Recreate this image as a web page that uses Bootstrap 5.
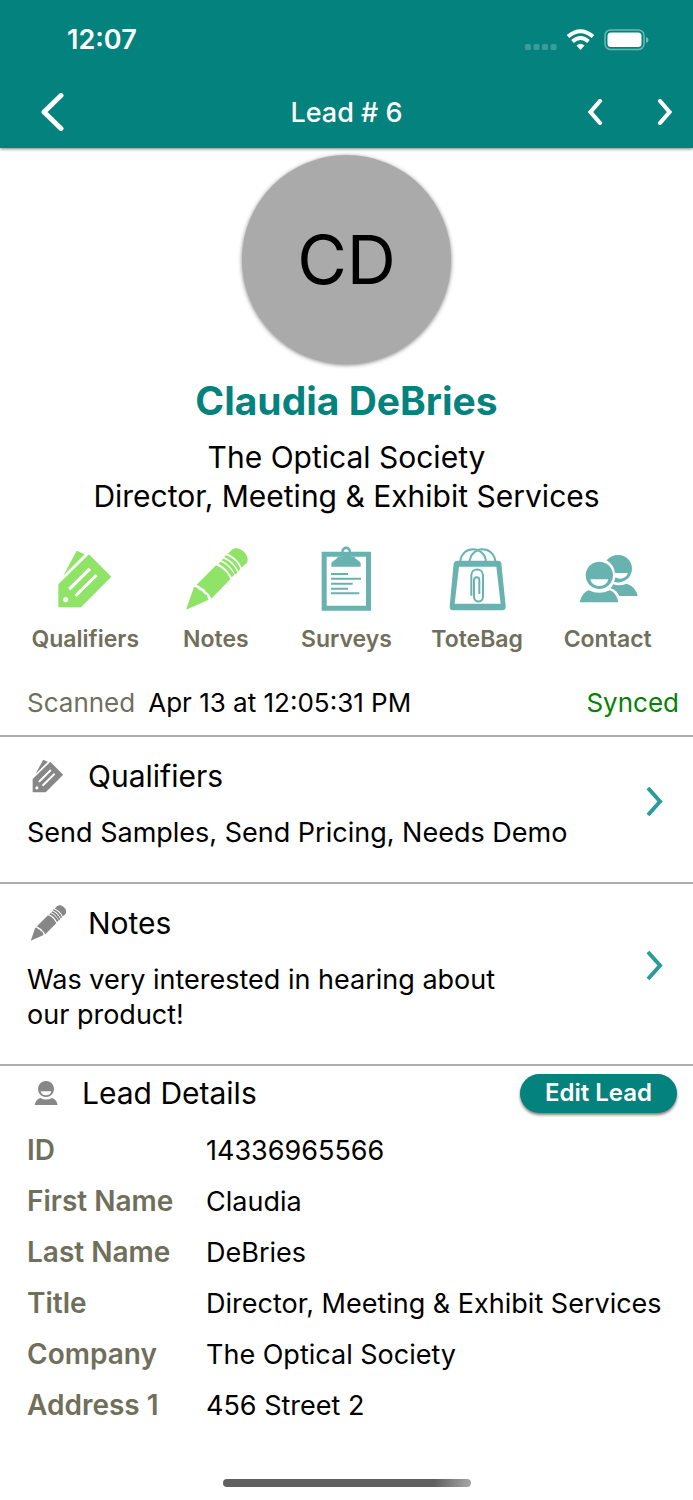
<!DOCTYPE html>
<html lang="en">
<head>
<meta charset="utf-8">
<meta name="viewport" content="width=device-width, initial-scale=1">
<title>Lead # 6</title>
<link href="https://cdn.jsdelivr.net/npm/bootstrap@5.3.0/dist/css/bootstrap.min.css" rel="stylesheet">
<style>
  :root { --teal: #04827e; --olive: #706f5b; --rule: #aeaeae; }
  body { font-family: Inter, "Liberation Sans", sans-serif; font-size: 27px; line-height: 35px; color: #000; background: #fff; }
  button { line-height: inherit; }
  svg { display: block; flex: none; }
  .app-header { background: var(--teal); color: #fff; box-shadow: 0 1px 3px rgba(0,0,0,.5); }
  .status-row { height: 76px; padding: 3px 44px 0 67px; font-weight: 600; }
  .title-row { height: 72px; padding: 0 20px; }
  .title-row h1 { font-size: 27px; line-height: 35px; font-weight: 500; }
  .side { flex: 1 1 0; }
  .back { margin-left: 20px; }
  .icon-btn { background: none; border: 0; padding: 0; color: inherit; }
  .avatar { width: 209px; height: 209px; margin-top: 7px; background: #aaa; font-size: 68px; box-shadow: 0 1px 4px rgba(0,0,0,.5); }
  .person-name { font-size: 39px; line-height: 48px; font-weight: 700; color: var(--teal); margin-top: 13px; }
  .person-role { font-size: 30px; line-height: 39px; margin-top: 13px; }
  .actions { padding: 30px 20px 0; }
  .actions a { flex: 1 1 0; color: #68b2b0; text-decoration: none; }
  .actions a.done { color: #8fe468; }
  .actions span { font-size: 23px; line-height: 30px; font-weight: 600; color: var(--olive); margin-top: 12px; }
  .scan-row { padding: 31px 14px 15px 27px; font-size: 26px; }
  .stamp { gap: 13px; }
  .muted { color: var(--olive); }
  .synced { color: #058205; }
  .panel { border-top: 2px solid var(--rule); padding: 19px 30px 18px 27px; }
  .panel h2, .details h2 { font-size: 30px; line-height: 40px; font-weight: 400; }
  .panel h2 { gap: 19px; margin-bottom: 19px; }
  .panel p { padding-bottom: 14px; }
  .panel .note { max-width: 500px; }
  .glyph { color: #878787; }
  .go { color: #2a9c98; margin-bottom: 18px; }
  .details { border-top: 2px solid var(--rule); padding: 7px 16px 0 27px; }
  .details h2 { gap: 17px; }
  .edit { background: var(--teal); color: #fff; font-size: 24px; line-height: 30px; font-weight: 600; border: 0; border-radius: 20px; padding: 4px 25px 5px; box-shadow: 0 2px 3px rgba(0,0,0,.5); }
  .fields { width: 100%; margin-top: 12px; }
  .fields th { width: 179px; font-size: 28px; font-weight: 600; color: var(--olive); }
  .fields th, .fields td { padding: 8px 0; white-space: nowrap; }
  .home-bar { width: 248px; height: 8px; border-radius: 4px; margin-bottom: 13px; background: linear-gradient(100deg, #606060 85%, #a8a8a8); }
</style>
</head>
<body class="d-flex flex-column min-vh-100">

<svg width="0" height="0" class="position-absolute" aria-hidden="true">
  <symbol id="tags" viewBox="96 48 198 198">
    <path fill="currentColor" d="M170 62 194 73 130 137Z"/>
    <path fill="currentColor" fill-rule="evenodd" d="M207 73 274 140 183 232H115V163ZM137 201a8 8 0 1 0 .1 0ZM206 113 145 174 151 181 213 120ZM226 133 164 194 170 200 232 139Z"/>
    <path stroke="#fff" stroke-width="8" d="M209 116 148 177M229 136 167 197"/>
  </symbol>
  <symbol id="pencil" viewBox="487 48 198 198">
    <g fill="currentColor">
      <path d="M496 239 520 171C528 172 532 175 535 180C542 181 547 184 549 190C556 192 560 196 561 202L563 210Z"/>
      <path d="M527 165 586 106C604 112 622 129 629 148L571 207C569 197 565 191 557 187C554 180 549 176 541 173C538 169 533 166 527 165Z"/>
      <path d="M593 101 600 95C617 102 634 119 641 135L633 142C625 125 611 110 593 101Z"/>
      <path d="M602 91 608 86C628 93 644 110 650 128L643 134C636 116 621 99 602 91Z"/>
      <path d="M610 81 616 76C636 83 653 99 659 117L653 124C645 105 630 89 610 81Z"/>
      <path d="M621 71 634 59C642 52 656 53 668 64C681 75 685 91 677 100L663 113C656 94 641 79 621 71Z"/>
    </g>
  </symbol>
  <symbol id="clipboard" viewBox="70 48 198 198">
    <path fill="currentColor" fill-rule="evenodd" d="M96 65H244V242H96ZM111 80V227H229V80Z"/>
    <path fill="currentColor" fill-rule="evenodd" d="M125 110V100C129 91 140 90 145 80H155V64A14 14 0 0 1 184 64V80H194C199 90 210 91 213 100V110ZM169.500 58a8 8 0 1 0 .1 0Z"/>
    <path stroke="currentColor" stroke-width="6" d="M124 132H175M124 146H214M124 161H189M124 176H175M124 190H209"/>
  </symbol>
  <symbol id="tote" viewBox="462 48 198 198">
    <path fill="currentColor" fill-rule="evenodd" d="M501 92H625Q633 92 634 100L647 228Q648 241 637 241H489Q478 241 479 228L491 100Q493 92 501 92ZM507 110 494 221H632L619 110Z"/>
    <g fill="none" stroke="currentColor" stroke-width="6">
      <path d="M511 94C516 46 582 46 588 94M539 94C545 46 610 46 616 94"/>
      <path d="M544 197V136C544 113 579 113 579 136V199C579 220 552 220 552 199V151C552 139 568 139 568 151V192"/>
    </g>
  </symbol>
  <symbol id="people" viewBox="73 48 198 198">
    <path fill="currentColor" d="M203 75A41 41 0 0 1 244 116A41 41 0 0 1 190 155Q194 146 194 142Q209 150 222 142Q229 138 232 129H193Q190 105 168 91Q182 75 203 75Z"/>
    <path fill="currentColor" d="M188 163Q206 170 228 161Q254 168 261 198H206Q200 182 180 175Z"/>
    <path fill="currentColor" fill-rule="evenodd" d="M146 95a41 41 0 1 0 .1 0ZM119 148H173Q169 168 146 168T119 148Z"/>
    <path fill="currentColor" d="M114 181Q146 196 177 181Q198 188 203 217H87Q94 188 114 181Z"/>
  </symbol>
  <symbol id="person" viewBox="81 90 114 72">
    <path fill="currentColor" fill-rule="evenodd" d="M138 90a24 24 0 1 0 .1 0ZM122 121H154Q152 133 138 133T122 121Z"/>
    <path fill="currentColor" d="M121 141Q138 150 156 141Q170 145 173 162H104Q107 145 121 141Z"/>
  </symbol>
  <symbol id="chevron" viewBox="0 0 17 31">
    <path fill="none" stroke="currentColor" stroke-width="4" d="M2 2 14 15.500 2 29"/>
  </symbol>
</svg>

<header class="app-header">
  <div class="status-row d-flex align-items-center justify-content-between">
    <span>12:07</span>
    <svg width="125" height="24" viewBox="0 0 125 24" aria-label="Wi-Fi on, battery full">
      <g fill="#fff" fill-opacity=".22"><rect x="1" y="16" width="6" height="6" rx="1.500"/><rect x="9.500" y="16" width="6" height="6" rx="1.500"/><rect x="18" y="16" width="6" height="6" rx="1.500"/><rect x="26.500" y="16" width="6" height="6" rx="1.500"/></g>
      <g fill="none" stroke="#fff" stroke-width="4"><path d="M44 8.500Q56.500 -2 69 8.500"/><path d="M48.500 13.500Q56.500 6.500 64.500 13.500"/></g>
      <path fill="#fff" d="M52.500 17.500Q56.500 14 60.500 17.500L56.500 22Z"/>
      <rect x="81" y="2" width="39" height="19.500" rx="5.500" fill="none" stroke="#fff" stroke-opacity=".42" stroke-width="1.500"/>
      <rect x="83.500" y="4.500" width="34" height="14.500" rx="3.500" fill="#fff"/>
      <path fill="#fff" fill-opacity=".45" d="M122 9Q124.500 9.500 124.500 12T122 15Z"/>
    </svg>
  </div>
  <div class="title-row d-flex align-items-center">
    <div class="side"><button class="icon-btn back d-block" aria-label="Back"><svg width="24" height="38" viewBox="0 0 24 38"><path d="M21 2.500 4 19 21 35.500" fill="none" stroke="#fff" stroke-width="5" stroke-linecap="round" stroke-linejoin="round"/></svg></button></div>
    <h1 class="m-0">Lead # 6</h1>
    <div class="side d-flex justify-content-end gap-5">
      <button class="icon-btn me-1" aria-label="Previous lead"><svg width="18" height="26" viewBox="0 0 18 26"><path d="M13 2 3.500 13 13 24" fill="none" stroke="#fff" stroke-width="4.200" stroke-linecap="round"/></svg></button>
      <button class="icon-btn" aria-label="Next lead"><svg width="16" height="26" viewBox="0 0 16 26"><path d="M3 2 12.500 13 3 24" fill="none" stroke="#fff" stroke-width="4.200" stroke-linecap="round"/></svg></button>
    </div>
  </div>
</header>

<main>
  <section class="text-center">
    <div class="avatar rounded-circle mx-auto d-flex align-items-center justify-content-center">CD</div>
    <h2 class="person-name mb-0">Claudia DeBries</h2>
    <p class="person-role mb-0">The Optical Society<br>Director, Meeting &amp; Exhibit Services</p>
  </section>

  <nav class="actions d-flex" aria-label="Lead actions">
    <a href="#qualifiers" class="done d-flex flex-column align-items-center"><svg width="66" height="66"><use href="#tags"/></svg><span>Qualifiers</span></a>
    <a href="#notes" class="done d-flex flex-column align-items-center"><svg width="66" height="66"><use href="#pencil"/></svg><span>Notes</span></a>
    <a href="#surveys" class="d-flex flex-column align-items-center"><svg width="66" height="66"><use href="#clipboard"/></svg><span>Surveys</span></a>
    <a href="#totebag" class="d-flex flex-column align-items-center"><svg width="66" height="66"><use href="#tote"/></svg><span>ToteBag</span></a>
    <a href="#contact" class="d-flex flex-column align-items-center"><svg width="66" height="66"><use href="#people"/></svg><span>Contact</span></a>
  </nav>

  <div class="scan-row d-flex justify-content-between">
    <div class="stamp d-flex"><span class="muted">Scanned</span><span>Apr 13 at 12:05:31 PM</span></div>
    <span class="synced">Synced</span>
  </div>

  <section id="qualifiers" class="panel d-flex align-items-center justify-content-between">
    <div>
      <h2 class="d-flex align-items-center"><svg class="glyph" width="42" height="38"><use href="#tags"/></svg>Qualifiers</h2>
      <p class="mb-0">Send Samples, Send Pricing, Needs Demo</p>
    </div>
    <button class="icon-btn go" aria-label="Open qualifiers"><svg width="17" height="31"><use href="#chevron"/></svg></button>
  </section>

  <section id="notes" class="panel d-flex align-items-center justify-content-between">
    <div>
      <h2 class="d-flex align-items-center"><svg class="glyph" width="42" height="38"><use href="#pencil"/></svg>Notes</h2>
      <p class="note mb-0">Was very interested in hearing about our product!</p>
    </div>
    <button class="icon-btn go" aria-label="Open notes"><svg width="17" height="31"><use href="#chevron"/></svg></button>
  </section>

  <section class="details">
    <div class="d-flex align-items-center justify-content-between">
      <h2 class="d-flex align-items-center mb-0"><svg class="glyph" width="38" height="24"><use href="#person"/></svg>Lead Details</h2>
      <button class="edit">Edit Lead</button>
    </div>
    <table class="fields">
      <tbody>
        <tr><th scope="row">ID</th><td>14336965566</td></tr>
        <tr><th scope="row">First Name</th><td>Claudia</td></tr>
        <tr><th scope="row">Last Name</th><td>DeBries</td></tr>
        <tr><th scope="row">Title</th><td>Director, Meeting &amp; Exhibit Services</td></tr>
        <tr><th scope="row">Company</th><td>The Optical Society</td></tr>
        <tr><th scope="row">Address 1</th><td>456 Street 2</td></tr>
      </tbody>
    </table>
  </section>
</main>

<div class="home-bar mx-auto mt-auto"></div>

<script src="https://cdn.jsdelivr.net/npm/bootstrap@5.3.0/dist/js/bootstrap.bundle.min.js"></script>
</body>
</html>
